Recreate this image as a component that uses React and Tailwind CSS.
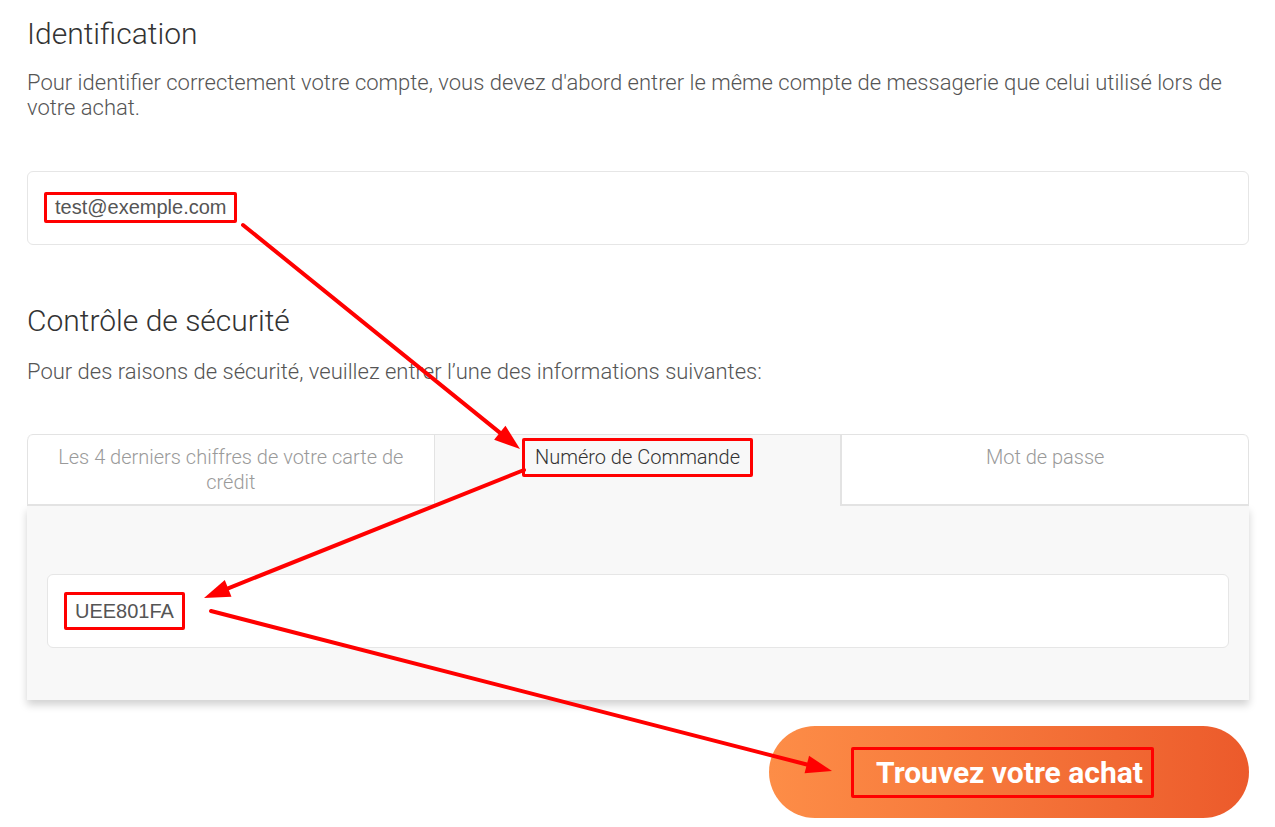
import React from "react";

const roboto = { fontFamily: "Roboto, 'Noto Sans', sans-serif" };
const arial = { fontFamily: "'Liberation Sans', Arial, sans-serif" };

function Arrow({ x1, y1, x2, y2 }) {
  const dx = x2 - x1;
  const dy = y2 - y1;
  const len = Math.sqrt(dx * dx + dy * dy);
  const ux = dx / len;
  const uy = dy / len;
  const head = 26;
  const half = 9;
  const bx = x2 - ux * head;
  const by = y2 - uy * head;
  const p1 = `${bx - uy * half},${by + ux * half}`;
  const p2 = `${bx + uy * half},${by - ux * half}`;
  return (
    <g>
      <line x1={x1} y1={y1} x2={bx + ux * 4} y2={by + uy * 4} stroke="#ff0000" strokeWidth="4" strokeLinecap="round" />
      <polygon points={`${x2},${y2} ${p1} ${p2}`} fill="#ff0000" />
    </g>
  );
}

export default function App() {
  return (
    <div className="relative w-full min-h-[827px] bg-white overflow-hidden" style={roboto}>
      <div className="pl-[27px] pr-[26px] pt-4">
        <h1 className="text-[30px] leading-[36px] font-light text-[#333]">Identification</h1>
        <p className="mt-[18px] text-[22px] leading-[25px] font-light text-[#555]">
          Pour identifier correctement votre compte, vous devez d'abord entrer le même compte de messagerie que celui utilisé lors de votre achat.
        </p>

        <div className="mt-[51px] h-[74px] border border-[#e6e6e6] rounded-md flex items-center pl-4 bg-white">
          <span
            className="inline-block border-[3px] border-[#ff0000] rounded-[2px] px-2 text-[20px] leading-[25px] text-[#555] -mt-[1px]"
            style={arial}
          >
            test@exemple.com
          </span>
        </div>

        <h2 className="mt-[58px] text-[30px] leading-[36px] font-light text-[#333]">Contrôle de sécurité</h2>
        <p className="mt-[20px] text-[22px] leading-[25px] font-light text-[#555]">
          Pour des raisons de sécurité, veuillez entrer l’une des informations suivantes:
        </p>

        <div className="mt-[50px]">
          <div className="flex border-t border-[#e3e3e3] rounded-t-md overflow-hidden text-center text-[20px] leading-[25px]">
            <div className="flex-1 h-[71px] pt-[10px] px-6 bg-white text-[#9a9a9a] font-light border-b-2 border-l border-r border-[#e3e3e3] rounded-tl-md">
              Les 4 derniers chiffres de votre carte de crédit
            </div>
            <div className="flex-1 h-[71px] pt-[3px] px-6 bg-[#f8f8f8] text-[#333] font-light">
              <span className="inline-block border-[3px] border-[#ff0000] rounded-[2px] px-[10px] leading-[33px]">
                Numéro de Commande
              </span>
            </div>
            <div className="flex-1 h-[71px] pt-[10px] px-6 bg-white text-[#9a9a9a] font-light border-b-2 border-l-2 border-r border-[#e3e3e3] rounded-tr-md">
              Mot de passe
            </div>
          </div>
          <div className="bg-[#f8f8f8] h-[194px] pt-[68px] px-5 shadow-[0_5px_8px_rgba(0,0,0,0.18)]">
            <div className="h-[74px] bg-white border border-[#e6e6e6] rounded-md flex items-center pl-4">
              <span
                className="inline-block border-[3px] border-[#ff0000] rounded-[2px] px-2 text-[20px] leading-[32px] text-[#555]"
                style={arial}
              >
                UEE801FA
              </span>
            </div>
          </div>
        </div>

        <div className="mt-[26px] flex justify-end">
          <button className="w-[480px] h-[92px] rounded-full bg-linear-to-r from-[#fd8d47] to-[#ec5a2b] flex items-center justify-center pr-[13px]">
            <span className="inline-block border-[3px] border-[#ff0000] rounded-[2px] pl-[22px] pr-[8px] h-[51px] leading-[45px] text-white text-[30px] font-bold">
              Trouvez votre achat
            </span>
          </button>
        </div>
      </div>

      <svg className="absolute inset-0 pointer-events-none" width="1275" height="827">
        <Arrow x1={243} y1={225} x2={520} y2={449} />
        <Arrow x1={524} y1={470} x2={204} y2={598} />
        <Arrow x1={211} y1={611} x2={832} y2={771} />
      </svg>
    </div>
  );
}
